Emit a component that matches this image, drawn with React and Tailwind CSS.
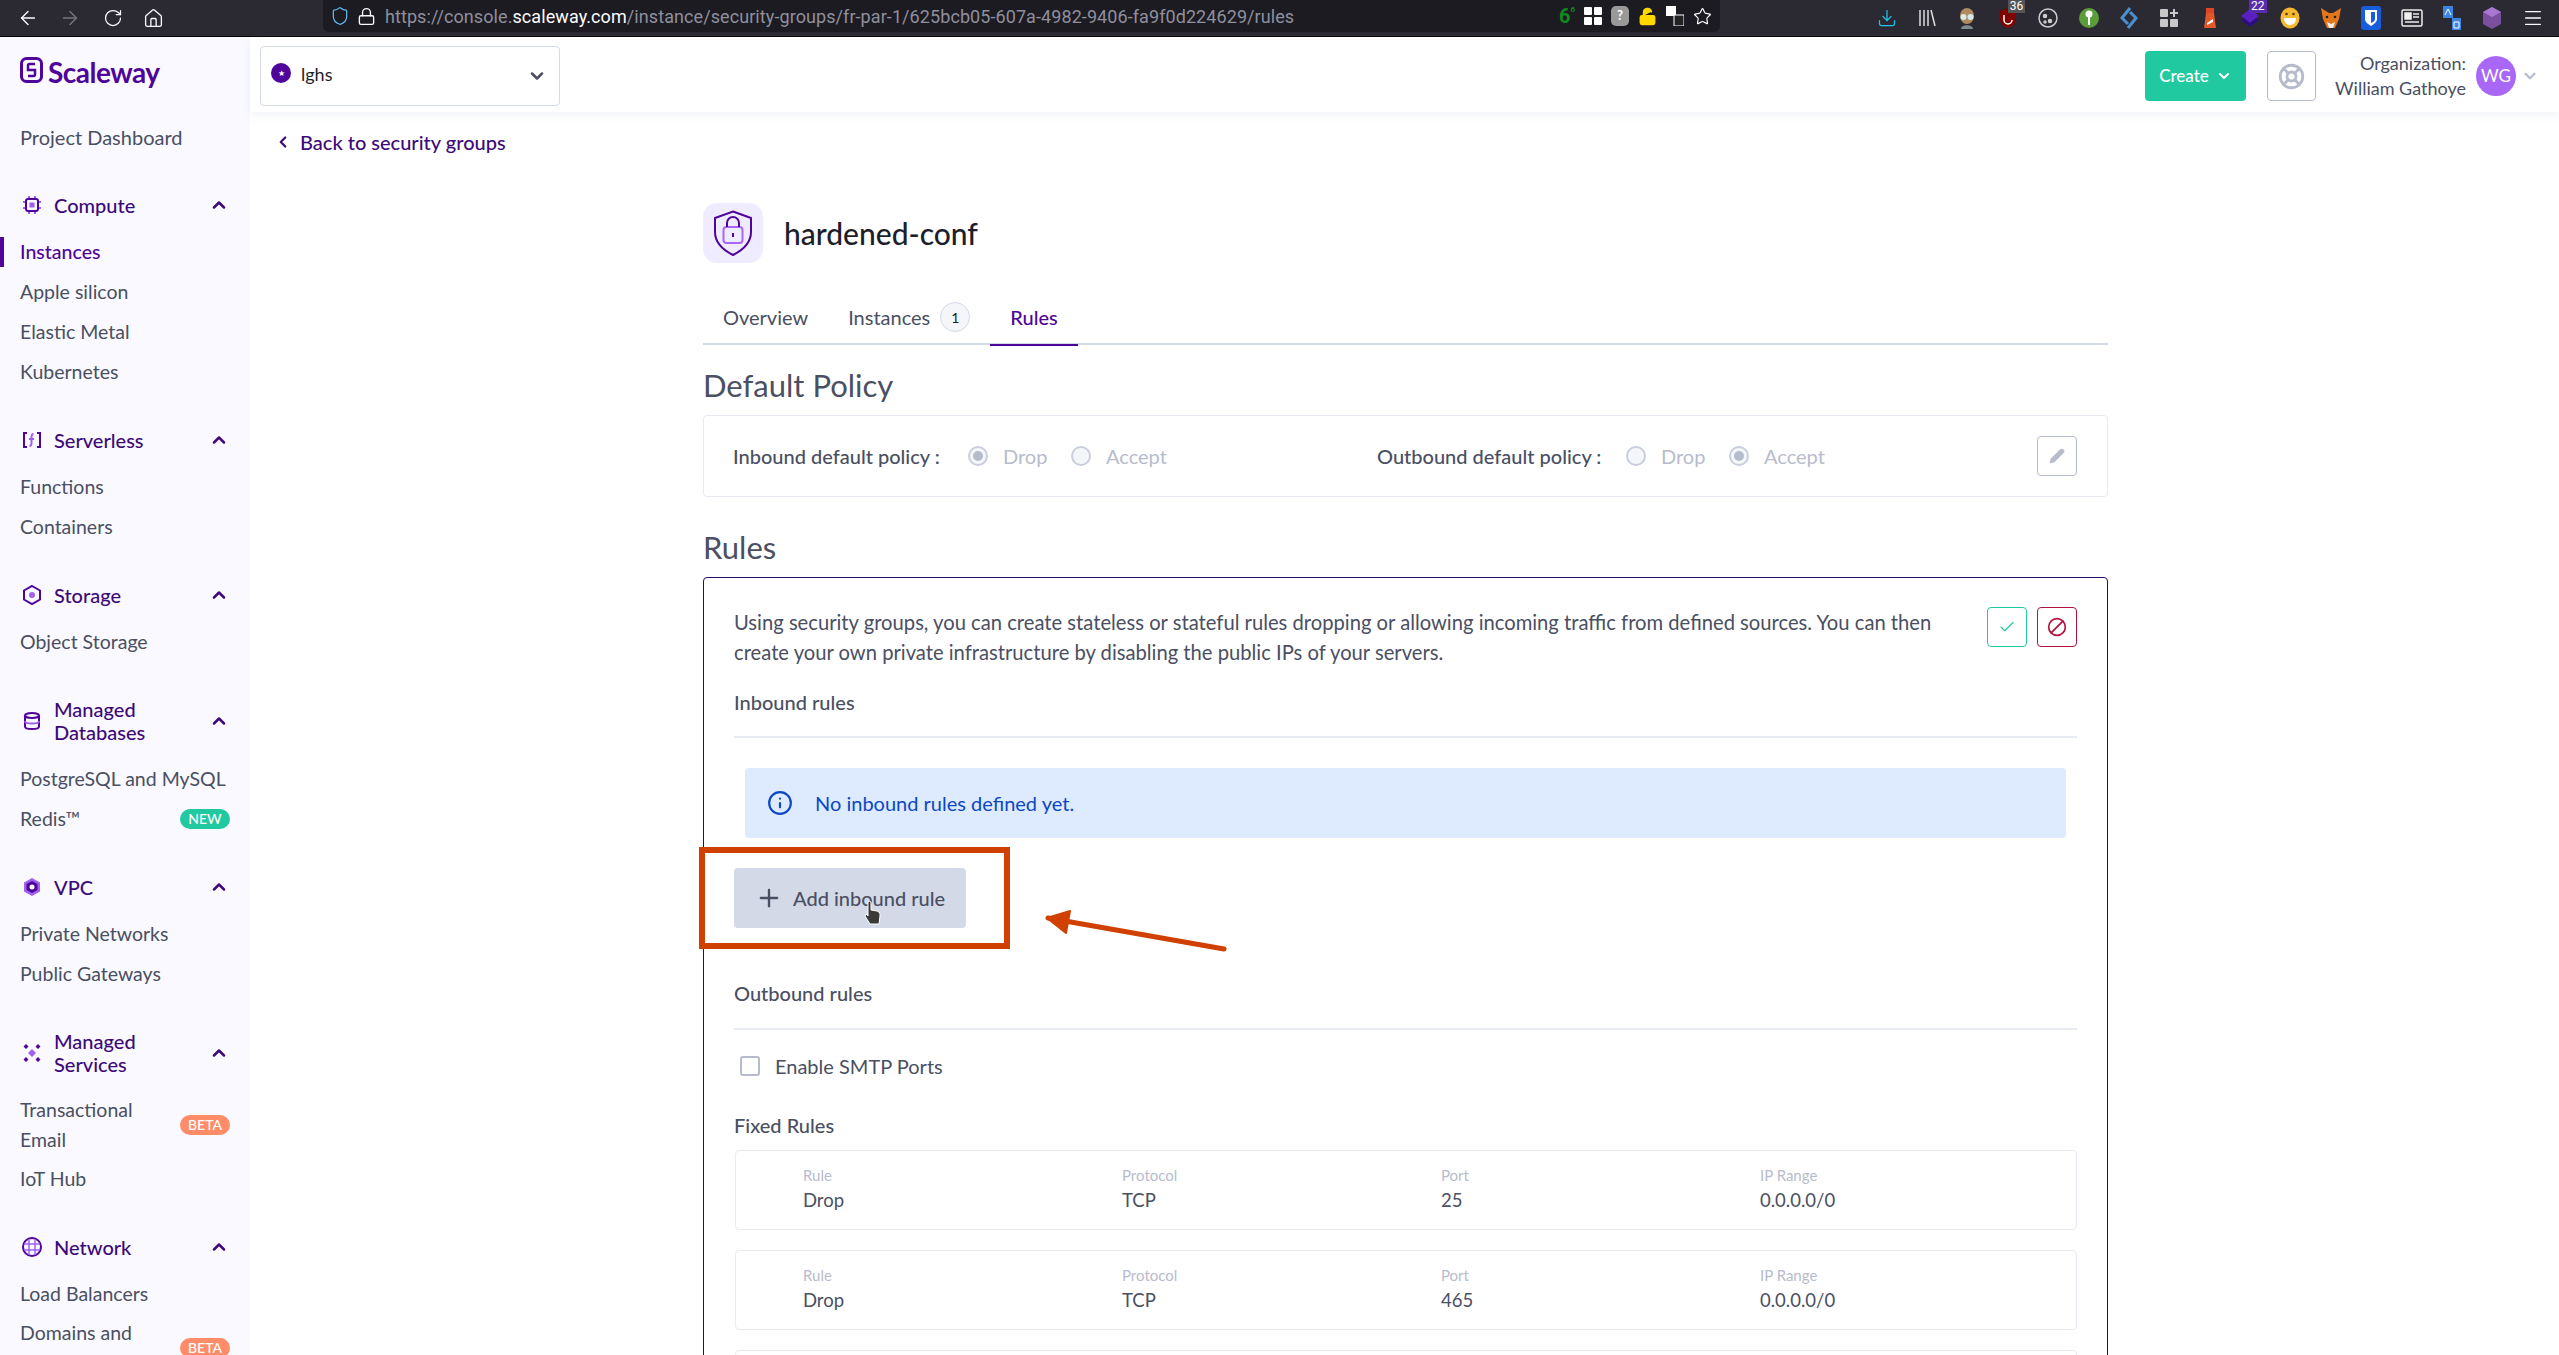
import React from 'react';
import { ArrowLeft, ArrowRight, RotateCw, Home, Lock, Shield, Star, ChevronUp, ChevronDown, ChevronLeft, Check, Ban, Pencil, Plus, Info, LifeBuoy, Menu, Download, LockOpen } from 'lucide-react';

const NAV = [
  { title: 'Compute', icon: 'cpu', items: [{ label: 'Instances', active: true }, { label: 'Apple silicon' }, { label: 'Elastic Metal' }, { label: 'Kubernetes' }] },
  { title: 'Serverless', icon: 'fn', items: [{ label: 'Functions' }, { label: 'Containers' }] },
  { title: 'Storage', icon: 'hex', items: [{ label: 'Object Storage' }] },
  { title: 'Managed Databases', icon: 'db', tall: true, items: [{ label: 'PostgreSQL and MySQL' }, { label: 'Redis™', badge: 'NEW' }] },
  { title: 'VPC', icon: 'vpc', items: [{ label: 'Private Networks' }, { label: 'Public Gateways' }] },
  { title: 'Managed Services', icon: 'dots', tall: true, items: [{ label: 'Transactional Email', badge: 'BETA' }, { label: 'IoT Hub' }] },
  { title: 'Network', icon: 'globe', items: [{ label: 'Load Balancers' }, { label: 'Domains and DNS', badge: 'BETA' }] },
];

const NavIcon = ({ name }) => {
  const p = '#4f0599';
  const l = '#a060f0';
  return (
    <svg width="22" height="22" viewBox="0 0 22 22" fill="none" strokeWidth="2">
      {name === 'cpu' && (
        <>
          <rect x="5" y="5" width="12" height="12" rx="2" stroke={p} />
          <rect x="8.5" y="8.5" width="5" height="5" fill={l} />
          <path d="M8 2v2M14 2v2M8 18v2M14 18v2M2 8h2M2 14h2M18 8h2M18 14h2" stroke={l} />
        </>
      )}
      {name === 'fn' && (
        <>
          <path d="M6 4H3v14h3M16 4h3v14h-3" stroke={p} />
          <path d="M12.5 5c-2 0-2 1.500-2 3v6c0 1.500-.5 3-2 3M8 10h5" stroke={l} />
        </>
      )}
      {name === 'hex' && (
        <>
          <path d="M11 2l8 4.500v9L11 20l-8-4.500v-9z" stroke={p} />
          <circle cx="11" cy="11" r="3" fill={l} />
        </>
      )}
      {name === 'db' && (
        <>
          <ellipse cx="11" cy="5.500" rx="7" ry="2.500" stroke={p} />
          <path d="M4 5.500v11c0 1.500 3 2.500 7 2.500s7-1 7-2.500v-11" stroke={p} />
          <path d="M4 11c0 1.500 3 2.500 7 2.500s7-1 7-2.500" stroke={l} />
        </>
      )}
      {name === 'vpc' && (
        <>
          <path d="M11 2l8 4.500v9L11 20l-8-4.500v-9z" fill={l} />
          <path d="M11 5l5.500 3v6L11 17l-5.500-3V8z" fill={p} />
          <circle cx="11" cy="11" r="2.500" fill="#f9f9ff" />
        </>
      )}
      {name === 'dots' && (
        <>
          <path d="M5 2l2.500 2.500L5 7 2.500 4.500zM17 2l2.500 2.500L17 7l-2.500-2.500zM5 15l2.500 2.500L5 20l-2.500-2.500zM17 15l2.500 2.500L17 20l-2.500-2.500z" fill={p} />
          <path d="M11 7l4 4-4 4-4-4z" fill={l} />
        </>
      )}
      {name === 'globe' && (
        <>
          <circle cx="11" cy="11" r="9" stroke={p} />
          <path d="M3 8h16M3 14h16M8 3v16M14 3v16" stroke={l} strokeWidth="1.500" />
        </>
      )}
    </svg>
  );
};

const Badge = ({ text }) => (
  <span className={`flex h-5 w-[50px] shrink-0 items-center justify-center rounded-full text-[14px] font-medium text-white ${text === 'NEW' ? 'bg-[#20c9a0]' : 'bg-[#ff8c69]'}`}>
    {text}
  </span>
);

const Sidebar = () => (
  <aside className="h-[1318px] w-[250px] shrink-0 overflow-hidden bg-[#f9f9ff] text-[#4a4f62]">
    <div className="flex h-[80px] items-start gap-[5px] pl-5 pt-[20px]">
      <svg width="23" height="26" viewBox="0 0 23 26" fill="none">
        <rect x="1.500" y="1.500" width="20" height="23" rx="5" stroke="#4f0599" strokeWidth="3" />
        <path d="M15 7H9.500A1.500 1.500 0 0 0 8 8.500V13h7v4.500a1.500 1.500 0 0 1-1.500 1.500H8" stroke="#4f0599" strokeWidth="2.500" />
      </svg>
      <span className="text-[28px] font-bold leading-[30px] tracking-[-0.5px] text-[#4f0599]">Scaleway</span>
    </div>
    <div className="flex h-10 items-center pl-5">Project Dashboard</div>
    {NAV.map((g) => (
      <div key={g.title} className="mt-7 first-of-type:mt-[29px]">
        <div className={`mb-[7px] flex items-center text-[#3d0a78] ${g.tall ? 'h-[62px]' : 'h-10'}`}>
          <div className="flex w-[54px] shrink-0 justify-center pl-[10px]">
            <NavIcon name={g.icon} />
          </div>
          <span className="w-[150px] font-medium leading-[23px]">{g.title}</span>
          <ChevronUp size={20} strokeWidth={3} className="ml-[5px] text-[#3d0a78]" />
        </div>
        {g.items.map((it) => (
          <div key={it.label} className={`relative flex min-h-10 items-center justify-between pl-5 pr-[20px] text-[19.500px] leading-[30px] ${it.badge === 'BETA' ? 'py-1' : 'whitespace-nowrap'}`}>
            {it.active && <span className="absolute left-0 top-[5px] h-[30px] w-1 bg-[#4f0599]" />}
            <span className={`${it.badge === 'BETA' ? 'w-[125px]' : ''} ${it.active ? 'font-medium text-[#4f0599]' : ''}`}>{it.label}</span>
            {it.badge && <Badge text={it.badge} />}
          </div>
        ))}
      </div>
    ))}
  </aside>
);

const Ext = ({ children }) => <div className="flex h-[36px] w-[40.4px] shrink-0 items-center justify-center">{children}</div>;

const Count = ({ n, className }) => (
  <span className={`absolute -top-[8px] left-[10px] px-[2px] font-['Roboto',sans-serif] text-[12px] leading-[14px] text-white ${className}`}>{n}</span>
);

const BrowserBar = () => (
  <div className="flex h-[37px] shrink-0 items-start border-b border-black bg-[#2b2a33] text-[#fbfbfe]">
    <div className="flex w-[323px] shrink-0 items-center pl-[17px] pt-[7px]">
      <ArrowLeft size={22} strokeWidth={1.500} />
      <ArrowRight size={22} strokeWidth={1.500} className="ml-5 text-[#77767d]" />
      <RotateCw size={20} strokeWidth={1.500} className="ml-[22px]" />
      <Home size={21} strokeWidth={1.500} className="ml-5" />
    </div>
    <div className="flex h-8 w-[1397px] shrink-0 items-center rounded-b-md bg-[#1c1b22] pl-[7px]">
      <Shield size={20} strokeWidth={1.500} className="text-[#60b8f0]" />
      <Lock size={19} strokeWidth={1.700} className="ml-[7px]" />
      <div className="ml-[9px] flex-1 truncate font-['Roboto',sans-serif] text-[18px] tracking-[0.08px] text-[#8f8f9d]">
        https://console.<span className="text-[#fbfbfe]">scaleway.com</span>/instance/security-groups/fr-par-1/625bcb05-607a-4982-9406-fa9f0d224629/rules
      </div>
      <div className="flex items-center gap-[9px] pr-[8px]">
        <span className="font-['Roboto',sans-serif] text-[20px] font-bold leading-none text-[#0f8a1f]">6<span className="align-top text-[8px]">6</span></span>
        <svg width="18" height="18" viewBox="0 0 18 18" fill="#fff"><rect x="0" y="0" width="8" height="8" rx="1" /><rect x="10" y="0" width="8" height="8" rx="1" /><rect x="0" y="10" width="8" height="8" rx="1" /><rect x="10" y="10" width="8" height="8" rx="1" /></svg>
        <span className="flex h-[20px] w-[18px] items-center justify-center rounded-[5px] bg-[#999] text-[13px] font-bold text-white">?</span>
        <LockOpen size={19} className="text-[#ffd800]" fill="#ffd800" />
        <svg width="18" height="20" viewBox="0 0 18 20"><rect x="0" y="0" width="10" height="10" fill="#fff" /><rect x="8" y="9" width="10" height="11" fill="#222" stroke="#fff" /></svg>
        <Star size={19} strokeWidth={1.500} />
      </div>
    </div>
    <div className="ml-auto flex pr-[6px]">
      <Ext><Download size={20} strokeWidth={1.500} className="text-[#20c4ea]" /></Ext>
      <Ext><svg width="18" height="18" viewBox="0 0 18 18" stroke="#ddd" strokeWidth="1.500"><path d="M2 1v16M6 1v16M10 1v16M13 1l4 16" /></svg></Ext>
      <Ext><svg width="20" height="22" viewBox="0 0 20 22"><ellipse cx="10" cy="9" rx="7" ry="8" fill="#b08a60" /><circle cx="6.500" cy="10" r="3" fill="#d8e8e8" /><circle cx="13.500" cy="10" r="3" fill="#d8e8e8" /><path d="M4 22c0-5 12-5 12 0z" fill="#7f8a90" /></svg></Ext>
      <Ext>
        <div className="relative flex">
          <svg width="20" height="22" viewBox="0 0 20 22"><path d="M10 1l8 3v8c0 5-4 8-8 9-4-1-8-4-8-9V4z" fill="#800000" /><path d="M6 8v5a4 4 0 0 0 8 0" stroke="#fff" strokeWidth="1.500" fill="none" /></svg>
          <Count n="36" className="bg-[#555]" />
        </div>
      </Ext>
      <Ext><svg width="22" height="22" viewBox="0 0 22 22" fill="none" stroke="#ccc" strokeWidth="1.500"><circle cx="11" cy="11" r="9" /><circle cx="8" cy="9" r="1.500" fill="#ccc" /><circle cx="13" cy="14" r="1.500" fill="#ccc" /><circle cx="8" cy="15" r="1" fill="#ccc" /></svg></Ext>
      <Ext><svg width="22" height="22" viewBox="0 0 22 22"><circle cx="11" cy="11" r="10" fill="#5a9e3a" /><circle cx="11" cy="7" r="3.500" fill="#fff" /><rect x="10" y="9" width="2" height="9" fill="#fff" /></svg></Ext>
      <Ext><svg width="20" height="24" viewBox="0 0 20 24" fill="none" stroke="#4a90d0" strokeWidth="3"><path d="M11 2L3 12l6 6M9 22l8-10-6-6" /></svg></Ext>
      <Ext><svg width="18" height="18" viewBox="0 0 18 18" fill="#c8c8c8"><rect x="0" y="0" width="8" height="8" rx="1" /><rect x="0" y="10" width="8" height="8" rx="1" /><rect x="10" y="10" width="8" height="8" rx="1" /><path d="M13 0h2v3h3v2h-3v3h-2V5h-3V3h3z" /></svg></Ext>
      <Ext><svg width="16" height="24" viewBox="0 0 16 24"><rect x="4" y="2" width="8" height="5" fill="#e0452a" /><path d="M2 22l2-15h8l2 15z" fill="#e0582a" /><path d="M5 17l6-4v3l-6 3z" fill="#fff" /></svg></Ext>
      <Ext>
        <div className="relative flex">
          <svg width="22" height="22" viewBox="0 0 22 22"><path d="M11 2l9 7-9 7-9-7z" fill="#5a1fc0" /><path d="M2 13l9 7 9-7-3-2-6 5-6-5z" fill="#2b0f80" /></svg>
          <Count n="22" className="bg-[#5a2bb0]" />
        </div>
      </Ext>
      <Ext><svg width="20" height="22" viewBox="0 0 20 22"><ellipse cx="10" cy="11" rx="9.500" ry="10.500" fill="#f5b82e" /><path d="M4 11h12c0 5-3 7-6 7s-6-2-6-7z" fill="#fff" /><circle cx="6.500" cy="7" r="1.300" fill="#5a3a10" /><circle cx="13.500" cy="7" r="1.300" fill="#5a3a10" /></svg></Ext>
      <Ext><svg width="22" height="22" viewBox="0 0 22 22"><path d="M1 1l8 5h4l8-5-2 11-4 9H7l-4-9z" fill="#e2761b" /><path d="M7 15l4 2 4-2-2 6H9z" fill="#eee" /><circle cx="7" cy="10" r="1.300" fill="#222" /><circle cx="15" cy="10" r="1.300" fill="#222" /></svg></Ext>
      <Ext><svg width="20" height="24" viewBox="0 0 20 24"><rect x="0" y="0" width="20" height="24" rx="3" fill="#175ddc" /><path d="M4 4h12v9c0 3-3 5-6 7-3-2-6-4-6-7z" fill="#fff" /><path d="M10 6h4v7c0 2-2 3-4 4z" fill="#175ddc" /></svg></Ext>
      <Ext><svg width="22" height="18" viewBox="0 0 22 18" fill="none" stroke="#eee" strokeWidth="1.500"><rect x="1" y="1" width="20" height="16" rx="1.500" /><rect x="4" y="4" width="6" height="6" fill="#eee" /><path d="M12 5h6M12 8h6M4 13h14" /></svg></Ext>
      <Ext><svg width="18" height="24" viewBox="0 0 18 24"><rect x="0" y="0" width="10" height="12" fill="#3a86e0" /><rect x="9" y="12" width="9" height="12" fill="#3a86e0" /><path d="M2 9l3-6 3 6M11 16h5v6h-5z" stroke="#fff" strokeWidth="1" fill="none" /></svg></Ext>
      <Ext><svg width="20" height="24" viewBox="0 0 20 24"><path d="M10 1l9 5v12l-9 5-9-5V6z" fill="#7a4fa0" /><path d="M10 1l9 5-9 5-9-5z" fill="#a878d0" /></svg></Ext>
      <Ext><Menu size={22} strokeWidth={1.500} /></Ext>
    </div>
  </div>
);

const TopBar = () => (
  <div className="flex h-[75px] shrink-0 items-start bg-white shadow-[0_4px_8px_rgba(212,217,232,0.25)]">
    <div className="ml-[10px] mt-[9px] flex h-[60px] w-[300px] items-start rounded-[4px] border border-[#d4d9e8] pl-[10px] pr-[12px] pt-[16px] text-[18px] text-[#1c1e29]">
      <span className="flex h-5 w-5 items-center justify-center rounded-full bg-[#4f0599] text-[8px] text-white">★</span>
      <span className="ml-[10px] flex-1 leading-[22px]">lghs</span>
      <ChevronDown size={20} strokeWidth={3} className="mt-[3px] text-[#4a4f62]" />
    </div>
    <div className="ml-auto mt-[14px] flex items-start">
      <div className="flex h-[50px] w-[101px] items-center justify-center gap-[7px] rounded-[4px] bg-[#20c9a0] text-[17px] font-medium text-white">
        Create
        <ChevronDown size={16} strokeWidth={3} />
      </div>
      <div className="ml-[21px] flex h-[50px] w-[49px] items-center justify-center rounded-[4px] border border-[#b7bccc]">
        <LifeBuoy size={27} strokeWidth={2.500} className="text-[#b7bccc]" />
      </div>
      <div className="ml-[18px] w-[132px] whitespace-nowrap text-right text-[18px] leading-[25px] text-[#4a4f62]">
        <div>Organization:</div>
        <div>William Gathoye</div>
      </div>
      <div className="ml-[10px] mt-[5px] flex h-10 w-10 items-center justify-center rounded-full bg-[#a868f5] text-[17px] text-white">WG</div>
      <ChevronDown size={18} strokeWidth={3} className="ml-[5px] mr-[20px] mt-4 text-[#b7bccc]" />
    </div>
  </div>
);

const Radio = ({ checked, label }) => (
  <div className="flex items-center gap-[15px] text-[#b7bccc]">
    <span className="flex h-5 w-5 items-center justify-center rounded-full border-2 border-[#c9cedc] bg-[#f5f6fa]">
      {checked && <span className="h-[10px] w-[10px] rounded-full bg-[#b7bccc]" />}
    </span>
    <span className="w-[58px]">{label}</span>
  </div>
);

const SquareBtn = ({ className, children }) => (
  <div className={`flex h-10 w-10 items-center justify-center rounded-[4px] border ${className}`}>{children}</div>
);

const RuleCard = ({ port }) => (
  <div className="grid h-20 grid-cols-[319px_319px_319px_1fr] rounded-[4px] border border-[#e9ebf2] pl-[67px] pt-[14px]">
    {[['Rule', 'Drop'], ['Protocol', 'TCP'], ['Port', port], ['IP Range', '0.0.0.0/0']].map(([k, v]) => (
      <div key={k}>
        <div className="text-[15px] leading-5 text-[#b7bccc]">{k}</div>
        <div className="text-[18.500px] leading-[30px] text-[#4a4f62]">{v}</div>
      </div>
    ))}
  </div>
);

export default function App() {
  return (
    <div className="flex h-[1355px] w-[2559px] flex-col overflow-hidden bg-white font-['Lato',sans-serif] text-[20px] text-[#4a4f62]">
      <BrowserBar />
      <div className="flex min-h-0 flex-1">
        <Sidebar />
        <div className="flex min-w-0 flex-1 flex-col">
          <TopBar />
          <div className="flex h-[62px] shrink-0 items-center pb-[2px] pl-[24px] font-medium text-[#3d0a78]">
            <ChevronLeft size={18} strokeWidth={3} />
            <span className="ml-[8px]">Back to security groups</span>
          </div>
          <div className="ml-[453px] mt-[29px] w-[1405px] shrink-0">
            <div className="flex h-[60px] items-center">
              <div className="flex h-[60px] w-[60px] items-center justify-center rounded-[14px] bg-[#f0ecff]">
                <svg width="40" height="46" viewBox="0 0 40 46" fill="none">
                  <path d="M20 1.500L38 8v14c0 11-8 18-18 23C10 40 2 33 2 22V8z" stroke="#4f0599" strokeWidth="2" />
                  <rect x="10.500" y="17" width="19" height="16" rx="3" stroke="#a868f5" strokeWidth="2" />
                  <path d="M14 17v-4a6 6 0 0 1 12 0v4" stroke="#4f0599" strokeWidth="2" />
                  <path d="M20 23v4" stroke="#4f0599" strokeWidth="2" />
                </svg>
              </div>
              <h1 className="ml-[21px] text-[30px] font-medium text-[#1c1e29]">hardened-conf</h1>
            </div>
            <div className="mt-10 flex h-[42px] items-center border-b-2 border-[#d4d9e8]">
              <div className="flex h-[42px] items-center px-5 pb-3">Overview</div>
              <div className="flex h-[42px] items-center pb-3 pl-5 pr-5">
                Instances
                <span className="ml-[10px] flex h-[30px] w-[30px] items-center justify-center rounded-full border border-[#d4d9e8] bg-[#f5f6fa] text-[14px] text-[#1c1e29]">1</span>
              </div>
              <div className="-mb-[2px] flex h-[44px] items-center border-b-2 border-[#4f0599] px-5 pb-3 font-medium text-[#4f0599]">Rules</div>
            </div>
            <h2 className="mt-[20px] flex h-10 items-center text-[31px]">Default Policy</h2>
            <div className="mt-[10px] flex h-[82px] items-center rounded-[4px] border border-[#e9ebf2] pl-[29px] pr-[30px]">
              <span className="w-[235px] font-medium">Inbound default policy :</span>
              <div className="flex gap-[10px]">
                <Radio checked label="Drop" />
                <Radio label="Accept" />
              </div>
              <span className="ml-[213px] w-[249px] font-medium">Outbound default policy :</span>
              <div className="flex gap-[10px]">
                <Radio label="Drop" />
                <Radio checked label="Accept" />
              </div>
              <SquareBtn className="ml-auto border-[#b7bccc]"><Pencil size={16} fill="#b7bccc" className="text-[#b7bccc]" /></SquareBtn>
            </div>
            <h2 className="mt-[30px] flex h-10 items-center text-[31px]">Rules</h2>
            <div className="mt-[10px] h-[900px] rounded-[4px] border border-[#2a0a66] px-[30px] pt-[29px]">
              <div className="flex items-start justify-between">
                <p className="w-[1250px] text-[20.200px] leading-[30px]">
                  Using security groups, you can create stateless or stateful rules dropping or allowing incoming traffic from defined sources. You can then<br />
                  create your own private infrastructure by disabling the public IPs of your servers.
                </p>
                <div className="flex gap-[10px]">
                  <SquareBtn className="border-[#20c9a0]"><Check size={18} strokeWidth={1.500} className="text-[#20c9a0]" /></SquareBtn>
                  <SquareBtn className="border-[#b1123e]"><Ban size={20} strokeWidth={2} className="-scale-x-100 text-[#b1123e]" /></SquareBtn>
                </div>
              </div>
              <div className="mt-[15px] h-[56px] border-b-2 border-[#e9ebf2] pt-[5px] font-medium leading-[30px]">Inbound rules</div>
              <div className="mx-[11px] mt-[30px] flex h-[70px] items-center rounded-[4px] bg-[#deebff] pl-[22px] text-[#0d47c4]">
                <Info size={26} strokeWidth={2} />
                <span className="ml-[22px]">No inbound rules defined yet.</span>
              </div>
              <div className="relative mt-[30px] w-[232px]">
                <div className="flex h-[60px] items-center rounded-[4px] bg-[#d4d9e8] pl-[21px]">
                  <Plus size={28} strokeWidth={2} />
                  <span className="ml-[10px] font-medium">Add inbound rule</span>
                </div>
                <svg className="absolute left-[128px] top-[32px]" width="22" height="26" viewBox="0 0 22 26">
                  <path d="M6 2a2 2 0 0 1 3 0v8l6 1c3 1 3 3 3 5l-1 8H8l-5-8 1-2 2 2z" fill="#3a3a3a" stroke="#fff" strokeWidth="1" />
                </svg>
                <div className="absolute -left-[35px] -top-[21px] h-[102px] w-[311px] border-[6px] border-[#d04000]" />
                <svg className="absolute left-[310px] top-[35px]" width="190" height="50" viewBox="0 0 190 50" fill="none">
                  <path d="M4 15L180 46" stroke="#d04000" strokeWidth="5" strokeLinecap="round" />
                  <path d="M3 15L26 8 22 30z" fill="#d04000" stroke="#d04000" strokeWidth="2" strokeLinejoin="round" />
                </svg>
              </div>
              <div className="mt-[45px] h-[57px] border-b-2 border-[#e9ebf2] pt-[5px] font-medium leading-[30px]">Outbound rules</div>
              <label className="mt-[26px] flex h-5 items-center pl-[6px]">
                <span className="h-5 w-5 rounded-[3px] border-2 border-[#b7bccc] bg-white" />
                <span className="ml-[15px]">Enable SMTP Ports</span>
              </label>
              <div className="mt-[29px] flex h-10 items-center font-medium">Fixed Rules</div>
              <div className="mt-[5px] flex flex-col gap-5 pl-px">
                <RuleCard port="25" />
                <RuleCard port="465" />
                <div className="h-20 rounded-[4px] border border-[#e9ebf2]" />
              </div>
            </div>
          </div>
        </div>
      </div>
    </div>
  );
}
